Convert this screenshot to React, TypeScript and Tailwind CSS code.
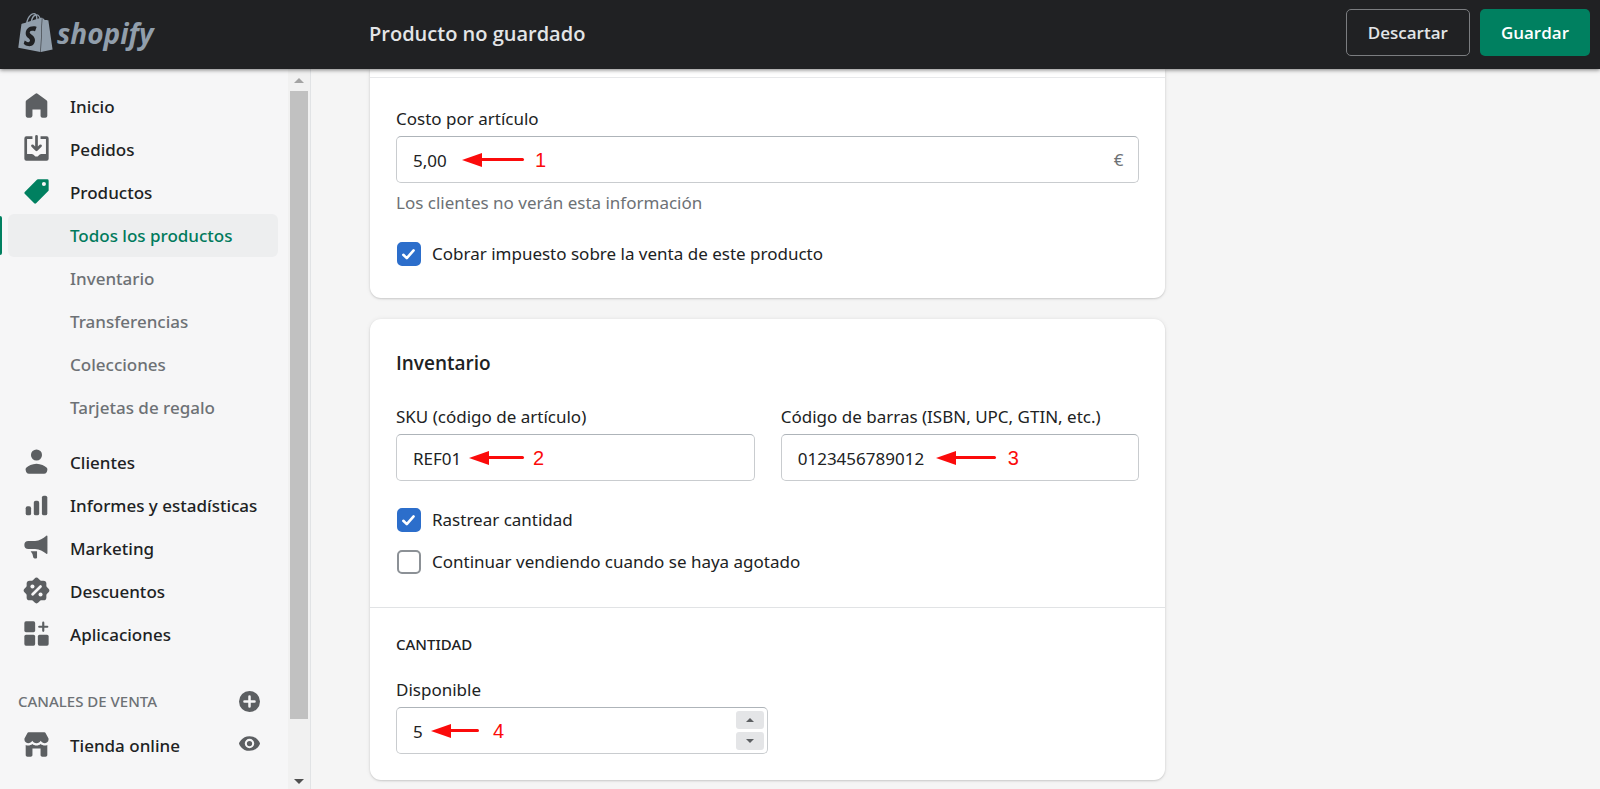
import React, { useState } from 'react';
import clsx from 'clsx';
import { SiShopify } from 'react-icons/si';

type IconProps = { className?: string };

function Icon({ className, children }: IconProps & { children: React.ReactNode }) {
  return (
    <svg viewBox="0 0 20 20" fill="currentColor" aria-hidden="true" className={clsx('shrink-0', className)}>
      {children}
    </svg>
  );
}

const icons = {
  home: (
    <path d="M18 7.261V17.5c0 .841-.672 1.5-1.5 1.5h-2c-.828 0-1.5-.659-1.5-1.5V13H7v4.477C7 18.318 6.328 19 5.5 19h-2c-.828 0-1.5-.682-1.5-1.523V7.261a1.5 1.5 0 0 1 .615-1.21l6.59-4.82a1.481 1.481 0 0 1 1.59 0l6.59 4.82A1.5 1.5 0 0 1 18 7.26z" />
  ),
  orders: (
    <>
      <path d="M11 1a1 1 0 1 0-2 0v7.586L7.707 7.293a1 1 0 0 0-1.414 1.414l3 3a1 1 0 0 0 1.414 0l3-3a1 1 0 0 0-1.414-1.414L11 8.586V1z" />
      <path d="M3 14V3h4V1H2.5A1.5 1.5 0 0 0 1 2.5v15A1.5 1.5 0 0 0 2.5 19h15a1.5 1.5 0 0 0 1.5-1.5v-15A1.5 1.5 0 0 0 17.5 1H13v2h4v11h-3.5c-.775 0-1.388.662-1.926 1.244l-.11.12A1.994 1.994 0 0 1 10 16a1.994 1.994 0 0 1-1.463-.637l-.111-.12C7.888 14.664 7.275 14 6.5 14H3z" />
    </>
  ),
  products: (
    <path d="M10.293 1.293A1 1 0 0 1 11 1h7a1 1 0 0 1 1 1v7a1 1 0 0 1-.293.707l-9 9a1 1 0 0 1-1.414 0l-7-7a1 1 0 0 1 0-1.414l9-9zM15.5 6a1.5 1.5 0 1 0 0-3 1.5 1.5 0 0 0 0 3z" />
  ),
  customers: (
    <>
      <circle cx="10" cy="5.2" r="4.1" />
      <path d="M2.6 14.5C4 13.4 6.7 11.7 10 11.7s6 1.7 7.4 2.8c.6.5.8 1.3.6 2l-.3 1A2.1 2.1 0 0 1 15.7 19H4.3a2.1 2.1 0 0 1-2-1.5l-.3-1c-.2-.7 0-1.5.6-2z" />
    </>
  ),
  analytics: (
    <>
      <rect x="2" y="11.3" width="4" height="6.7" rx="1.4" />
      <rect x="8" y="7.3" width="4" height="10.7" rx="1.4" />
      <rect x="14" y="3.5" width="4" height="14.5" rx="1.4" />
    </>
  ),
  marketing: (
    <>
      <path d="M17.3 1.3c.4-.3.8 0 .8.4v12.6c0 .5-.4.7-.8.4-2.6-1.9-4.9-3.200-8.300-3.500H4a3 3 0 0 1 0-6h5c3.400-.3 5.700-1.700 8.300-3.900z" />
      <path d="M5.700 12.700h4.700v4.700c0 .4-.3.700-.7.700H8.600c-.5 0-.9-.3-1-.8L7 14.900z" />
    </>
  ),
  discounts: (
    <>
      <rect x="2.7" y="2.7" width="14.6" height="14.6" rx="2.2" />
      <rect x="2.7" y="2.7" width="14.6" height="14.6" rx="2.2" transform="rotate(45 10 10)" />
      <g fill="#f6f6f7">
        <circle cx="7" cy="7" r="1.5" />
        <circle cx="13" cy="13" r="1.5" />
        <path d="M13.7 6.3a1 1 0 0 1 0 1.4l-6 6a1 1 0 0 1-1.4-1.4l6-6a1 1 0 0 1 1.4 0z" />
      </g>
    </>
  ),
  apps: (
    <>
      <rect x="1" y="1" width="8" height="8" rx="1.2" />
      <rect x="1" y="11" width="8" height="8" rx="1.2" />
      <rect x="11" y="11" width="8" height="8" rx="1.2" />
      <path d="M14.200 2a.8.8 0 1 1 1.600 0v2.200H18a.8.8 0 1 1 0 1.600h-2.200V8a.8.8 0 1 1-1.600 0V5.800H12a.8.8 0 1 1 0-1.600h2.200V2z" />
    </>
  ),
  store: (
    <>
      <path d="M3.2 1.6c.2-.4.5-.6 1-.6h11.600c.5 0 .8.2 1 .6L18.900 5.600c.3 2-1 3.400-2.700 3.400-1.300 0-2.400-.7-3.100-1.800C12.500 8.300 11.400 9 10 9s-2.500-.7-3.100-1.800C6.200 8.300 5.100 9 3.800 9 2.100 9 .8 7.600 1.100 5.600z" />
      <path d="M2 10.400c.6.3 1.200.4 1.900.4 1.100 0 2.200-.4 3-1.100.8.7 1.900 1.100 3.100 1.100s2.300-.4 3.100-1.100c.8.7 1.900 1.100 3 1.100.7 0 1.300-.1 1.900-.4v7.300c0 .7-.6 1.300-1.300 1.300h-2.400c-.7 0-1.300-.6-1.300-1.300V13H7v4.700C7 18.400 6.400 19 5.700 19H3.300C2.600 19 2 18.400 2 17.700z" />
    </>
  ),
  plus: (
    <path
      fillRule="evenodd"
      d="M10 0a10 10 0 1 0 0 20 10 10 0 0 0 0-20zm1.200 5.200a1.200 1.200 0 0 0-2.400 0v3.600H5.200a1.200 1.200 0 0 0 0 2.400h3.600v3.600a1.200 1.200 0 0 0 2.400 0v-3.600h3.600a1.200 1.200 0 0 0 0-2.400h-3.600z"
    />
  ),
  eye: (
    <path
      fillRule="evenodd"
      d="M19.900 9.600C19.800 9.400 17.400 3 10 3S.2 9.400.1 9.600a1.100 1.100 0 0 0 0 .8C.2 10.600 2.600 17 10 17s9.800-6.400 9.900-6.600a1.100 1.100 0 0 0 0-.8zM10 14.500a4.500 4.500 0 1 1 0-9 4.500 4.500 0 0 1 0 9zM10 7.500a2.500 2.500 0 1 0 0 5 2.500 2.500 0 0 0 0-5z"
    />
  ),
};

const mainLinks = [
  { name: 'Inicio', icon: icons.home },
  { name: 'Pedidos', icon: icons.orders },
  { name: 'Productos', icon: icons.products, active: true },
];

const productLinks = ['Todos los productos', 'Inventario', 'Transferencias', 'Colecciones', 'Tarjetas de regalo'];

const secondaryLinks = [
  { name: 'Clientes', icon: icons.customers },
  { name: 'Informes y estadísticas', icon: icons.analytics },
  { name: 'Marketing', icon: icons.marketing },
  { name: 'Descuentos', icon: icons.discounts },
  { name: 'Aplicaciones', icon: icons.apps },
];

function NavLink({ name, icon, active }: { name: string; icon: React.ReactNode; active?: boolean }) {
  return (
    <a href="#" className="flex h-[43px] pl-[23px] font-medium text-[#202223]">
      <Icon className={clsx('mt-[7px] size-[27px]', active ? 'text-[#008060]' : 'text-[#5c5f62]')}>{icon}</Icon>
      <span className="ml-5 self-center whitespace-nowrap">{name}</span>
    </a>
  );
}

function Sidebar() {
  return (
    <div className="flex w-[311px] shrink-0 border-r border-[#e1e3e5]">
      <nav className="min-w-0 flex-1 overflow-hidden pt-4 text-[17px]">
        {mainLinks.map((link) => (
          <NavLink key={link.name} {...link} />
        ))}
        {productLinks.map((name, index) => (
          <a
            key={name}
            href="#"
            className={clsx(
              'relative mr-[10px] ml-2 flex h-[43px] items-center rounded-md pl-[62px] font-medium',
              index === 0
                ? 'bg-[#edeeef] text-[#007a5c] before:absolute before:inset-y-[2px] before:-left-2 before:w-[2px] before:rounded-r before:bg-[#008060]'
                : 'text-[#6d7175]'
            )}
          >
            {name}
          </a>
        ))}
        <div className="mt-3">
          {secondaryLinks.map((link) => (
            <NavLink key={link.name} {...link} />
          ))}
        </div>
        <div className="mt-6 mb-px flex h-[43px] items-center justify-between pr-7 pl-[18px]">
          <h2 className="text-[15px] font-medium text-[#6d7175]">CANALES DE VENTA</h2>
          <button type="button" aria-label="Agregar canal de venta" className="text-[#5c5f62]">
            <Icon className="size-[21px]">{icons.plus}</Icon>
          </button>
        </div>
        <div className="flex items-start justify-between pr-7">
          <NavLink name="Tienda online" icon={icons.store} />
          <button type="button" aria-label="Ver tienda online" className="mt-[9px] text-[#5c5f62]">
            <Icon className="size-[21px]">{icons.eye}</Icon>
          </button>
        </div>
      </nav>
      <div className="flex w-[22px] flex-col items-center bg-[#f1f1f1]" aria-hidden="true">
        <svg viewBox="0 0 10 5" className="mt-[9px] mb-2 h-[5px] w-[10px]" fill="#a3a3a3">
          <path d="M0 5 5 0l5 5z" />
        </svg>
        <div className="flex w-full grow justify-center pb-[60px]">
          <div className="w-[18px] bg-[#c1c1c1]" />
        </div>
        <svg viewBox="0 0 10 5" className="mb-[5px] h-[5px] w-[10px]" fill="#505050">
          <path d="M0 0h10L5 5z" />
        </svg>
      </div>
    </div>
  );
}

type Callout = { number: number; className: string; arrow: string };

function CalloutArrow({ number, className, arrow }: Callout) {
  return (
    <div className={clsx('pointer-events-none absolute inset-y-0 flex items-center text-[#fb0b0b]', className)}>
      <div className={clsx('flex items-center', arrow)}>
        <svg viewBox="0 0 20 14" className="h-[14px] w-5 shrink-0" fill="currentColor">
          <path d="M0 7 20 0v14z" />
        </svg>
        <div className="h-[3px] grow rounded-r-sm bg-current" />
      </div>
      <span className="font-['Liberation_Sans',Arial,sans-serif] text-[20px] leading-5">{number}</span>
    </div>
  );
}

type FieldProps = {
  id: string;
  label: string;
  value: string;
  callout: Callout;
  children?: React.ReactNode;
  onChange?: (value: string) => void;
};

function Field({ id, label, value, callout, children, onChange }: FieldProps) {
  const [text, setText] = useState(value);

  return (
    <div>
      <label htmlFor={id} className="mb-[5px] block leading-6">
        {label}
      </label>
      <div className="relative">
        <input
          id={id}
          type="text"
          value={onChange ? value : text}
          onChange={(e) => (onChange ? onChange(e.target.value) : setText(e.target.value))}
          className="block h-[47px] w-full rounded-[5px] border border-[#c9cccf] border-t-[#aeb4b9] bg-white px-4 pt-[2px] outline-none"
        />
        <CalloutArrow {...callout} />
        {children}
      </div>
    </div>
  );
}

function Checkbox({ id, label, defaultChecked }: { id: string; label: string; defaultChecked?: boolean }) {
  return (
    <div className="flex h-[42px] items-center">
      <span className="relative ml-px flex size-6">
        <input
          id={id}
          type="checkbox"
          defaultChecked={defaultChecked}
          className="peer size-6 appearance-none rounded-[5px] border-2 border-[#8c9196] bg-white checked:border-[#2c6ecb] checked:bg-[#2c6ecb]"
        />
        <svg
          viewBox="0 0 24 24"
          fill="none"
          stroke="white"
          strokeWidth="2.6"
          strokeLinecap="round"
          strokeLinejoin="round"
          className="pointer-events-none absolute inset-0 hidden size-6 peer-checked:block"
        >
          <path d="m6.300 12.800 3.500 3.300 6.800-7.700" />
        </svg>
      </span>
      <label htmlFor={id} className="pl-[11px]">
        {label}
      </label>
    </div>
  );
}

function QuantityField() {
  const [quantity, setQuantity] = useState('5');
  const step = (amount: number) => setQuantity(String((Number(quantity) || 0) + amount));

  return (
    <Field
      id="disponible"
      label="Disponible"
      value={quantity}
      onChange={setQuantity}
      callout={{ number: 4, className: 'left-[35px] gap-[14px]', arrow: 'w-12' }}
    >
      <div className="absolute inset-y-1 right-1 flex w-7 flex-col gap-[3px]">
        <button
          type="button"
          aria-label="Aumentar"
          onClick={() => step(1)}
          className="flex flex-1 items-center justify-center rounded-[3px] bg-[#e4e5e7]"
        >
          <svg viewBox="0 0 8 4" className="h-1 w-2" fill="#5c5f62">
            <path d="M0 4 4 0l4 4z" />
          </svg>
        </button>
        <button
          type="button"
          aria-label="Disminuir"
          onClick={() => step(-1)}
          className="flex flex-1 items-center justify-center rounded-[3px] bg-[#e4e5e7]"
        >
          <svg viewBox="0 0 8 4" className="h-1 w-2" fill="#5c5f62">
            <path d="M0 0h8L4 4z" />
          </svg>
        </button>
      </div>
    </Field>
  );
}

export default function App() {
  return (
    <div className="flex h-screen flex-col overflow-hidden bg-[#f6f6f7] font-['Noto_Sans','Open_Sans',sans-serif] text-[17px] text-[#202223]">
      <header className="z-10 flex h-[69px] shrink-0 items-center bg-[#202123] font-['Open_Sans','Noto_Sans',sans-serif] shadow-[0_1px_4px_rgba(0,0,0,0.5)]">
        <a href="#" aria-label="Shopify" className="flex w-[311px] items-center pl-4 text-[#919eab]">
          <SiShopify className="-mt-1 size-[39px]" />
          <span className="ml-[2px] pb-1 text-[28px] leading-10 font-bold italic">shopify</span>
        </a>
        <h1 className="flex-1 pb-px pl-[58px] text-[20px] font-semibold text-[#e3e5e7]">Producto no guardado</h1>
        <div className="flex gap-[10px] pr-[10px] pb-[5px]">
          <button type="button" className="h-[47px] rounded-[5px] border border-[#7b7d80] px-[21px] pt-[2px] font-semibold text-[#e3e5e7]">
            Descartar
          </button>
          <button type="button" className="h-[47px] rounded-[5px] bg-[#008060] px-[21px] pt-[2px] font-semibold text-white">
            Guardar
          </button>
        </div>
      </header>

      <div className="flex min-h-0 flex-1">
        <Sidebar />

        <main className="min-w-0 flex-1 overflow-hidden bg-[#f5f5f5] px-[59px]">
          <div className="grid grid-cols-[9fr_4fr] gap-[22px]">
            <form className="flex flex-col gap-[21px] pb-2">
              <section className="rounded-b-[11px] bg-white shadow-[0_0_5px_rgba(23,24,24,0.07),0_1px_2px_rgba(0,0,0,0.15)]">
                <div className="h-[9px] border-b border-[#e7e8ea]" />
                <div className="px-[26px] pt-[29px] pb-3">
                  <Field
                    id="costo"
                    label="Costo por artículo"
                    value="5,00"
                    callout={{ number: 1, className: 'left-[66px] gap-[11px]', arrow: 'w-[62px]' }}
                  >
                    <span className="absolute inset-y-0 right-4 flex items-center text-[#6d7175]">€</span>
                  </Field>
                  <p className="mt-2 leading-6 text-[#6d7175]">Los clientes no verán esta información</p>
                  <div className="mt-[18px] mb-[11px]">
                    <Checkbox id="impuesto" label="Cobrar impuesto sobre la venta de este producto" defaultChecked />
                  </div>
                </div>
              </section>

              <section className="rounded-[11px] bg-white shadow-[0_0_5px_rgba(23,24,24,0.07),0_1px_2px_rgba(0,0,0,0.15)]">
                <div className="px-[26px] pt-7 pb-6">
                  <h2 className="font-['Open_Sans','Noto_Sans',sans-serif] text-[19px] leading-8 font-semibold">Inventario</h2>
                  <div className="mt-[26px] mb-[18px] grid grid-cols-2 gap-[26px]">
                    <Field
                      id="sku"
                      label="SKU (código de artículo)"
                      value="REF01"
                      callout={{ number: 2, className: 'left-[73px] gap-[9px]', arrow: 'w-[55px]' }}
                    />
                    <Field
                      id="barras"
                      label="Código de barras (ISBN, UPC, GTIN, etc.)"
                      value="0123456789012"
                      callout={{ number: 3, className: 'left-[155px] gap-3', arrow: 'w-[60px]' }}
                    />
                  </div>
                  <Checkbox id="rastrear" label="Rastrear cantidad" defaultChecked />
                  <Checkbox id="continuar" label="Continuar vendiendo cuando se haya agotado" />
                </div>
                <div className="border-t border-[#e1e3e5] px-[26px] pt-6 pb-[26px]">
                  <h3 className="text-[15px] leading-6 font-medium">CANTIDAD</h3>
                  <div className="mt-[22px] w-1/2">
                    <QuantityField />
                  </div>
                </div>
              </section>
            </form>
          </div>
        </main>
      </div>
    </div>
  );
}
